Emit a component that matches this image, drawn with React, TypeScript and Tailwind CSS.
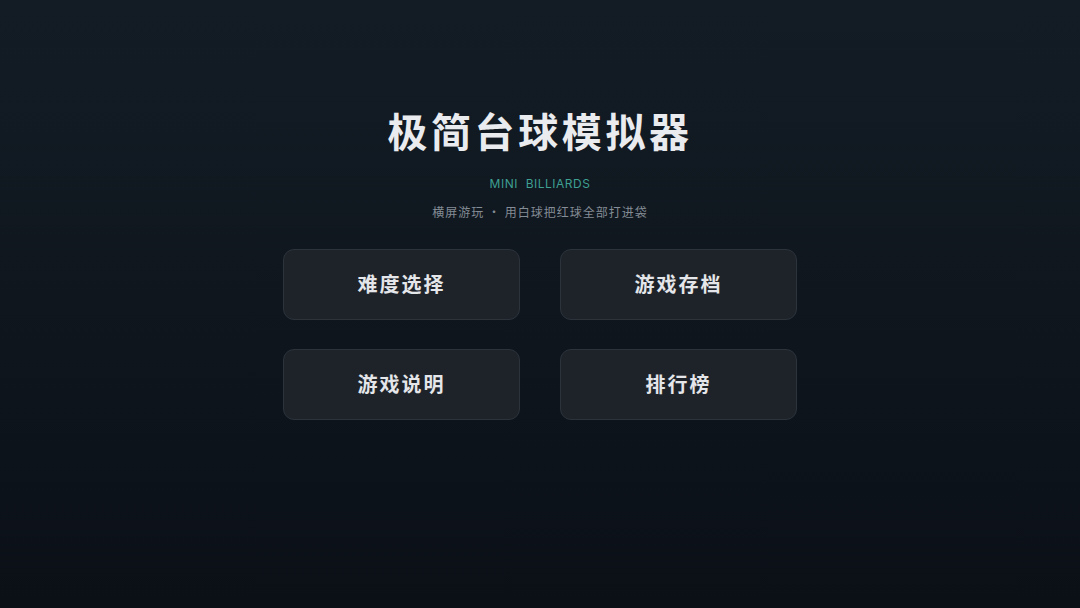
export default function App() {
  const items = ["难度选择", "游戏存档", "游戏说明", "排行榜"];
  return (
    <div
      className="w-[1080px] h-[608px] flex flex-col items-center bg-gradient-to-b from-[#131c25] to-[#0b1017]"
      style={{ fontFamily: '"Noto Sans CJK SC", Inter, sans-serif' }}
    >
      <h1 className="mt-[104px] text-[40px] leading-[52px] font-bold tracking-[3.6px] text-[#e9ebee]">
        极简台球模拟器
      </h1>
      <div
        className="mt-[20px] text-[12px] leading-[16px] tracking-[0.5px] text-[#3e9f92]"
        style={{ fontFamily: 'Inter, "Noto Sans CJK SC", sans-serif' }}
      >
        MINI&nbsp;&nbsp;BILLIARDS
      </div>
      <div className="mt-[12px] text-[12px] leading-[16px] tracking-[1px] text-[#848c95]">
        横屏游玩 · 用白球把红球全部打进袋
      </div>
      <div className="mt-[29px] grid grid-cols-[237px_237px] gap-x-[40px] gap-y-[29px]">
        {items.map((t) => (
          <button
            key={t}
            className="h-[71px] pb-[2px] rounded-[11px] border border-[#2c333b] bg-[#1e232a] text-[20px] font-bold tracking-[2px] text-[#e4e6e9] flex items-center justify-center"
          >
            {t}
          </button>
        ))}
      </div>
    </div>
  );
}
